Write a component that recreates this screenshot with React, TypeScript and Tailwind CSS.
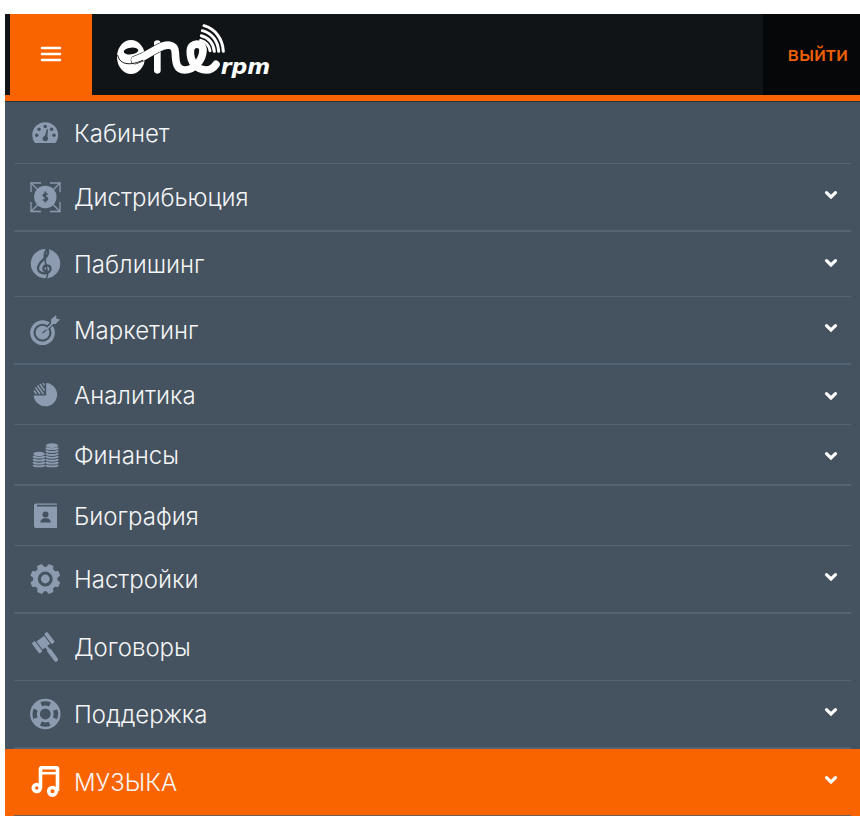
import type { ReactNode } from 'react'

type MenuItem = {
  label: string
  icon: ReactNode
  height: string
  line: string
  expandable?: boolean
  active?: boolean
  arrow?: string
}

function Icon({ children }: { children: ReactNode }) {
  return (
    <svg viewBox="0 0 30 30" className="size-[30px] shrink-0 overflow-visible" fill="currentColor" aria-hidden="true">
      {children}
    </svg>
  )
}

const bg = '#45525f'

function CabinetIcon() {
  return (
    <Icon>
      <path d="M5 25a12.9 12.9 0 1 1 20.4 0z" />
      <g fill={bg}>
        <circle cx="6.7" cy="17.3" r="1.7" />
        <circle cx="9" cy="11.2" r="1.7" />
        <circle cx="15.2" cy="8.5" r="1.7" />
        <circle cx="21.6" cy="11.2" r="1.7" />
        <circle cx="24" cy="17.3" r="1.7" />
        <circle cx="15.3" cy="20.6" r="2.7" />
        <path d="M16.8 11.2l1.3.3-1 9.5-3-.8z" />
      </g>
    </Icon>
  )
}

function DistributionIcon() {
  return (
    <Icon>
      <circle cx="15.3" cy="15" r="11.2" />
      <g fill="none" stroke="currentColor" strokeWidth="1.3">
        <path d="M1 10V1h10M20 1h10v9M30 20v9.500H20M11 29.500H1V20" />
        <path d="M1 1l7 7M30 1l-7 7M30 29.500l-7-7M1 29.500l7-7" />
      </g>
      <path d="M17.500 12.600c-.6-1-4.200-1.300-4.200.7s4.200 1.200 4.200 3.500-3.600 2-4.600.7M15.400 9.500v11" fill="none" stroke={bg} strokeWidth="1.700" />
    </Icon>
  )
}

function PublishingIcon() {
  return (
    <Icon>
      <circle cx="15.500" cy="14.700" r="14.700" />
      <g fill="none" stroke={bg} strokeLinecap="round">
        <path d="M15.200 10c-1.500-4 .5-9 2.300-10 1.500 3-.3 7-2.800 9.500-3.500 3-6.700 5.500-6.700 9.800 0 6.500 12.500 6.700 12.500.7 0-4.500-6.800-4.800-7.100-.5 0 1.500 1 2.500 2.200 2.700" strokeWidth="2.300" />
        <path d="M14.500 8l3 16.500c.5 3-.5 4-1.500 5" strokeWidth="1.600" />
      </g>
    </Icon>
  )
}

function MarketingIcon() {
  return (
    <Icon>
      <circle cx="12.500" cy="17.700" r="10.700" fill="none" stroke="currentColor" strokeWidth="3.300" />
      <circle cx="12.500" cy="17.700" r="6.900" />
      <path d="M12.500 18l5.500-4.500" stroke={bg} strokeWidth="1.300" />
      <path d="M17.500 13l5-5" stroke={bg} strokeWidth="4" />
      <path d="M16 14.800l7.500-7.300" stroke="currentColor" strokeWidth="1.700" />
      <path d="M21 9l.2-4.800L26 .2l.5 3.600 3.600.7-4.300 4.500z" />
    </Icon>
  )
}

function AnalyticsIcon() {
  return (
    <Icon>
      <path d="M16.200 3a11.700 11.700 0 1 1-12.500 12.500h12.500z" />
      <path d="M4 10.500l2.500 3.500M5.500 7.500l4.500 6.500M7.500 5.500l6 8.500M10 4l4.500 6.500M13 3l1.500 2.500" fill="none" stroke="currentColor" strokeWidth="1.400" />
    </Icon>
  )
}

function FinanceIcon() {
  return (
    <Icon>
      <ellipse cx="9" cy="13.900" rx="5.700" ry="2.200" />
      <ellipse cx="22" cy="5.600" rx="6" ry="2.300" />
      <g fill="none" stroke="currentColor" strokeWidth="1.900">
        <path d="M3.300 16c1 2.200 10.400 2.200 11.400 0M3.300 19c1 2.200 10.400 2.200 11.400 0M3.300 22c1 2.200 10.400 2.200 11.400 0M3.300 25c1 1.800 10.400 1.800 11.400 0" />
        <path d="M16 7.500c1 2.200 11 2.200 12 0M16 10.400c1 2.200 11 2.200 12 0M16 13.300c1 2.200 11 2.200 12 0M16 16.200c1 2.200 11 2.200 12 0M16 19.100c1 2.200 11 2.200 12 0M16 22c1 2.200 11 2.200 12 0M16 25c1 1.800 11 1.800 12 0" />
      </g>
    </Icon>
  )
}

function BiographyIcon() {
  return (
    <Icon>
      <path d="M6 2.500h21v1.300H7v1.700h20V27H6a2 2 0 0 1-2-2V4.500a2 2 0 0 1 2-2z" />
      <g fill={bg}>
        <circle cx="15.500" cy="13.500" r="3" />
        <path d="M10.300 21.500c0-3 2-4 3.500-4.300h3.500c1.500.3 3.500 1.300 3.500 4.300z" />
      </g>
    </Icon>
  )
}

function SettingsIcon() {
  return (
    <Icon>
      <circle cx="15.300" cy="15" r="12.200" />
      {[22.5, 67.5, 112.5, 157.5, 202.5, 247.5, 292.5, 337.5].map(angle => (
        <path key={angle} d="M11.300 5l1.200-4.400q.2-.7.900-.7h3.800q.7 0 .9.700L19.300 5z" transform={`rotate(${angle} 15.3 15)`} />
      ))}
      <circle cx="15.300" cy="15" r="5.900" fill="none" stroke={bg} strokeWidth="3" />
    </Icon>
  )
}

function ContractsIcon() {
  return (
    <Icon>
      <g transform="rotate(-37 14 12)">
        <rect x="4.500" y="4" width="4" height="13" rx="1.300" />
        <rect x="9.500" y="5.500" width="9.500" height="10" />
        <rect x="20" y="4" width="4" height="13" rx="1.300" />
        <path d="M12.900 15h2.600v4.500h.9v12a2.200 2.200 0 0 1-4.400 0v-12h.9z" />
      </g>
    </Icon>
  )
}

function SupportIcon() {
  return (
    <Icon>
      <circle cx="15.300" cy="15" r="15.200" />
      <circle cx="15.300" cy="15" r="5.400" fill={bg} />
      <circle cx="15.300" cy="15" r="10.600" fill="none" stroke={bg} strokeWidth="4.400" strokeDasharray="9 7.650" strokeDashoffset="4.500" />
    </Icon>
  )
}

function MusicIcon() {
  return (
    <Icon>
      <g fill="none" stroke="currentColor" strokeWidth="3.600">
        <circle cx="6.800" cy="21" r="3.500" />
        <circle cx="22.500" cy="24.300" r="3.800" />
        <path d="M10.500 21V1.700q0-1 1-1h15q1 0 1 1V24" />
        <path d="M10.500 6.200h16" strokeWidth="2.600" />
      </g>
    </Icon>
  )
}

const items: MenuItem[] = [
  { label: 'Кабинет', icon: <CabinetIcon />, height: 'h-[62px]', line: 'border-b' },
  { label: 'Дистрибьюция', icon: <DistributionIcon />, height: 'h-[68px]', line: 'border-b-2', expandable: true },
  { label: 'Паблишинг', icon: <PublishingIcon />, height: 'h-[65px]', line: 'border-b', expandable: true, arrow: 'pb-0.5' },
  { label: 'Маркетинг', icon: <MarketingIcon />, height: 'h-[68px]', line: 'border-b-2', expandable: true },
  { label: 'Аналитика', icon: <AnalyticsIcon />, height: 'h-[60px]', line: 'border-b', expandable: true, arrow: 'pt-0.5' },
  { label: 'Финансы', icon: <FinanceIcon />, height: 'h-[61px]', line: 'border-b-2', expandable: true, arrow: 'pt-0.5' },
  { label: 'Биография', icon: <BiographyIcon />, height: 'h-[60px]', line: 'border-b' },
  { label: 'Настройки', icon: <SettingsIcon />, height: 'h-[68px]', line: 'border-b-2', expandable: true },
  { label: 'Договоры', icon: <ContractsIcon />, height: 'h-[67px]', line: 'border-b' },
  { label: 'Поддержка', icon: <SupportIcon />, height: 'h-[68px]', line: 'border-b-2', expandable: true },
  { label: 'МУЗЫКА', icon: <MusicIcon />, height: 'h-[67px]', line: 'border-b', expandable: true, active: true },
]

function Logo() {
  const ribbon =
    'M405 180C416 176 424 173 430 170L470 147C500 130 525 130 526 158C527 190 530 210 554 210C582 210 609 180 609 150C609 127 573 125 571 152C569 188 592 210 618 210C634 210 642 202 648 193'
  return (
    <svg viewBox="345 66 471 192" className="h-16 w-[157px]" fill="none" stroke="#fff" strokeLinecap="round" role="img" aria-label="ONErpm">
      <ellipse cx="393" cy="171" rx="42" ry="51" fill="#fff" stroke="none" />
      <path d="M472 131V211" strokeWidth="20" />
      <path d={ribbon} stroke="#101416" strokeWidth="26" />
      <path d={ribbon} strokeWidth="23" />
      <path d="M353 166C360 198 396 196 428 181" stroke="#101416" strokeWidth="3" />
      <ellipse cx="393" cy="153" rx="22" ry="10" fill="#101416" stroke="none" transform="rotate(-6 393 153)" />
      <path d="M612 77C645 86 668 116 670 154M607 92C635 99 654 122 656 154M604 107C625 112 641 130 643 154M602 121C616 125 628 137 630 152" strokeWidth="9" />
      <text x="662" y="221" fill="#fff" stroke="none" className="font-['DejaVu_Sans'] text-[66px] font-bold italic">
        rpm
      </text>
    </svg>
  )
}

function Chevron() {
  return (
    <svg viewBox="0 0 14 10" className="h-[10px] w-[14px]" fill="none" stroke="#fff" strokeWidth="3.200" strokeLinecap="round" aria-hidden="true">
      <path d="M2.500 2.700L7 7l4.500-4.300" />
    </svg>
  )
}

function MenuRow({ item }: { item: MenuItem }) {
  const rowClass = `flex w-full items-center gap-[14px] pl-4 pr-[13px] text-left ${item.height} ${item.line} ${
    item.active ? 'border-[#6b625c]' : 'border-[#546473]'
  }`
  const content = (
    <>
      <span className={item.active ? 'text-white' : 'text-[#8c9bb0]'}>{item.icon}</span>
      <span className="flex-1 pt-0.5 text-2xl font-light text-[#f4f5f6]">{item.label}</span>
      {item.expandable && (
        <span className={item.arrow ?? 'pb-1'}>
          <Chevron />
        </span>
      )}
    </>
  )

  return (
    <li className={item.active ? 'bg-[#fa6400] px-[9px]' : 'px-[9px]'}>
      {item.expandable ? (
        <button type="button" className={rowClass}>
          {content}
        </button>
      ) : (
        <a href="#" className={rowClass}>
          {content}
        </a>
      )}
    </li>
  )
}

export default function App() {
  return (
    <div className="bg-white pt-[14px] pl-[5px] font-[Inter,sans-serif]">
      <header className="flex h-[87px] border-b-[6px] border-[#fa6400] bg-[#101416] pl-[5px]">
        <button type="button" aria-label="Меню" className="flex w-[82px] items-center justify-center bg-[#fa6400] pb-0.5">
          <svg viewBox="0 0 22 16" className="h-4 w-[22px]" fill="none" stroke="#fff" strokeWidth="2.600" strokeLinecap="round">
            <path d="M2 2h18M2 8h18M2 14h18" />
          </svg>
        </button>
        <div className="flex flex-1 items-center pb-0.5 pl-[23px]">
          <Logo />
        </div>
        <a href="#" className="flex w-[97px] items-center justify-end bg-[#060708] pr-3 pb-0.5 text-xl font-medium text-[#f06000]">
          выйти
        </a>
      </header>
      <nav className="border-t border-[#2b3238] bg-[#45525f]">
        <ul>
          {items.map(item => (
            <MenuRow key={item.label} item={item} />
          ))}
        </ul>
      </nav>
    </div>
  )
}
